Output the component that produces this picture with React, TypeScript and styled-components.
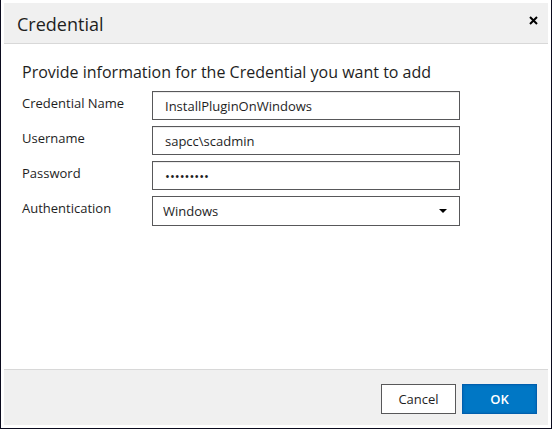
import React from 'react';
import styled, { createGlobalStyle } from 'styled-components';

const GlobalStyle = createGlobalStyle`
  *, *::before, *::after { box-sizing: border-box; }
  body {
    margin: 0;
    background: #fff;
    color: #1e1e1e;
    font: 13px/18px "Open Sans", "Noto Sans", sans-serif;
  }
  input, select, button { font: inherit; color: inherit; }
`;

const Dialog = styled.section`
  display: flex;
  flex-direction: column;
  min-height: 100vh;
  padding: 3px 3px 3px 3px;
  border: 1px solid #0b0b1e;
  border-top: 0;
  background: #fff;
`;

const Header = styled.header`
  display: flex;
  justify-content: space-between;
  padding: 9px 10px 7px 13px;
  background: #f0f0f0;
  border-bottom: 1px solid #d8d8d8;
`;

const Title = styled.h1`
  margin: 0;
  font-size: 18px;
  line-height: 24px;
  font-weight: 400;
`;

const CloseButton = styled.button`
  align-self: flex-start;
  display: flex;
  padding: 4px 0;
  border: 0;
  background: none;
`;

const Body = styled.form`
  flex: 1;
  padding: 16px 18px;
`;

const Intro = styled.h2`
  margin: 0 0 7px;
  font-size: 16px;
  line-height: 24px;
  font-weight: 400;
`;

const Row = styled.div`
  display: grid;
  grid-template-columns: 130px minmax(0, 308px);
  margin-bottom: 6px;
`;

const Label = styled.label`
  padding-top: 3px;
`;

const Input = styled.input`
  width: 100%;
  height: 29px;
  padding: 0 12px;
  border: 1px solid #58585a;
  border-radius: 0;
  background: #fff;
  box-shadow: inset 0 1px 0 #ececec;
`;

const SelectWrap = styled.div`
  display: grid;
  align-items: center;
  & > * { grid-area: 1 / 1; }
  & > svg { justify-self: end; margin-right: 13px; pointer-events: none; }
`;

const Select = styled.select`
  width: 100%;
  height: 30px;
  padding: 0 10px;
  border: 1px solid #58585a;
  border-radius: 0;
  background: #fff;
  appearance: none;
`;

const Footer = styled.footer`
  display: flex;
  justify-content: flex-end;
  gap: 6px;
  padding: 14px 11px 11px;
  background: #f0f0f0;
  border-top: 1px solid #d8d8d8;
`;

const Button = styled.button<{ $primary?: boolean }>`
  width: 75px;
  height: 30px;
  padding: 0;
  border: 1px solid ${p => (p.$primary ? '#005fae' : '#58585a')};
  background: ${p => (p.$primary ? '#0077c5' : '#fff')};
  box-shadow: ${p => (p.$primary ? 'inset 0 0 3px #005fae' : 'none')};
  color: ${p => (p.$primary ? '#fff' : '#1e1e1e')};
  font-weight: ${p => (p.$primary ? 600 : 400)};
`;

export default function App() {
  return (
    <>
      <GlobalStyle />
      <Dialog role="dialog" aria-labelledby="title">
        <Header>
          <Title id="title">Credential</Title>
          <CloseButton type="button" aria-label="Close">
            <svg width="9" height="9" viewBox="0 0 9 9" fill="none" stroke="#000" strokeWidth="2">
              <path d="M1 1l7 7M8 1L1 8" />
            </svg>
          </CloseButton>
        </Header>
        <Body id="credential-form">
          <Intro>Provide information for the Credential you want to add</Intro>
          <Row>
            <Label htmlFor="name">Credential Name</Label>
            <Input id="name" defaultValue="InstallPluginOnWindows" />
          </Row>
          <Row>
            <Label htmlFor="username">Username</Label>
            <Input id="username" defaultValue="sapcc\scadmin" />
          </Row>
          <Row>
            <Label htmlFor="password">Password</Label>
            <Input id="password" type="password" defaultValue="scadmin12" />
          </Row>
          <Row>
            <Label htmlFor="auth">Authentication</Label>
            <SelectWrap>
              <Select id="auth"><option>Windows</option></Select>
              <svg width="8" height="4" viewBox="0 0 8 4"><path d="M0 0h8L4 4z" fill="#000" /></svg>
            </SelectWrap>
          </Row>
        </Body>
        <Footer>
          <Button type="button">Cancel</Button>
          <Button type="submit" form="credential-form" $primary>OK</Button>
        </Footer>
      </Dialog>
    </>
  );
}
